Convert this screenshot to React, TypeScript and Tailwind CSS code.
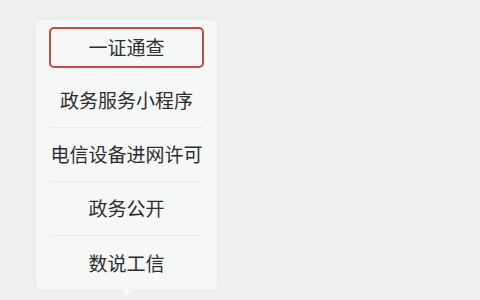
import React from "react";

const items = ["政务服务小程序", "电信设备进网许可", "政务公开", "数说工信"];

export default function App() {
  return (
    <div
      className="w-[480px] h-[300px] bg-[#eeefef] overflow-hidden pt-[20px] pl-[36px]"
      style={{ fontFamily: '"Noto Sans CJK SC", "Noto Sans", sans-serif' }}
    >
      <div className="relative w-[181px] h-[270px] bg-[#f6f7f7] rounded-[6px] flex flex-col shadow-[0_0_4px_rgba(0,0,0,0.03)]">
        <div className="h-[54px] flex items-center justify-center px-[13px]">
          <div className="w-full h-[41px] border-2 border-[#c8493e] rounded-[5px] flex items-center justify-center text-[19px] text-[#2e2e2e]">
            一证通查
          </div>
        </div>
        {items.map((t, i) => (
          <div key={t} className="h-[54px] px-[14px] flex flex-col">
            <div className="flex-1 flex items-center justify-center text-[19px] text-[#2e2e2e] whitespace-nowrap">
              {t}
            </div>
            {i < items.length - 1 && <div className="h-px bg-[#e8e9e9]" />}
          </div>
        ))}
        <div className="absolute left-[85px] bottom-[-6px] w-0 h-0 border-l-[6px] border-r-[6px] border-t-[6px] border-l-transparent border-r-transparent border-t-[#f6f7f7]" />
      </div>
    </div>
  );
}
